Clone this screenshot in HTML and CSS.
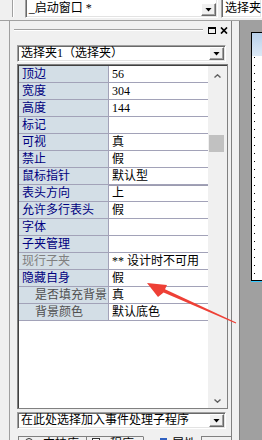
FILE: index.html
```html
<!DOCTYPE html>
<html lang="zh-CN">
<head>
    <meta charset="UTF-8">
    <title>属性</title>
    <link rel="stylesheet" href="styles.css">
</head>
<body>
    <div class="topbar">
        <div class="tb-grip"></div>
        <div class="combo win-combo">
            <span class="combo-text">_启动窗口 *</span>
            <span class="drop"></span>
        </div>
        <div class="combo unit-combo">
            <span class="combo-text">选择夹</span>
        </div>
    </div>
    <div class="main">
        <div class="panel">
            <div class="titlebar">
                <div class="grip-line"></div>
                <svg class="tb-btn max" width="8" height="7" viewBox="0 0 8 7">
                    <rect x="0.5" y="0.5" width="7" height="6" fill="none" stroke="#000"/>
                    <line x1="0" y1="1.5" x2="8" y2="1.5" stroke="#000"/>
                </svg>
                <svg class="tb-btn close" width="8" height="7" viewBox="0 0 8 7">
                    <path d="M1 0.5 L7 6.5 M7 0.5 L1 6.5" stroke="#000" stroke-width="1.7"/>
                </svg>
            </div>
            <div class="combo obj-combo">
                <span class="combo-text">选择夹1（选择夹）</span>
                <span class="drop"></span>
            </div>
            <div class="grid">
                <div class="rows">
                    <div class="row"><div class="k">顶边</div><div class="v">56</div></div>
                    <div class="row"><div class="k">宽度</div><div class="v">304</div></div>
                    <div class="row"><div class="k">高度</div><div class="v">144</div></div>
                    <div class="row"><div class="k">标记</div><div class="v"></div></div>
                    <div class="row"><div class="k">可视</div><div class="v">真</div></div>
                    <div class="row"><div class="k">禁止</div><div class="v">假</div></div>
                    <div class="row focus"><div class="k">鼠标指针</div><div class="v">默认型</div></div>
                    <div class="row"><div class="k">表头方向</div><div class="v">上</div></div>
                    <div class="row"><div class="k">允许多行表头</div><div class="v">假</div></div>
                    <div class="row"><div class="k">字体</div><div class="v"></div></div>
                    <div class="row"><div class="k">子夹管理</div><div class="v"></div></div>
                    <div class="row"><div class="k off">现行子夹</div><div class="v">** 设计时不可用</div></div>
                    <div class="row"><div class="k">隐藏自身</div><div class="v">假</div></div>
                    <div class="row"><div class="k sub">是否填充背景</div><div class="v">真</div></div>
                    <div class="row"><div class="k sub">背景颜色</div><div class="v">默认底色</div></div>
                </div>
                <div class="scrollbar">
                    <div class="sb-btn up">
                        <svg width="7" height="4" viewBox="0 0 7 4"><path d="M0.5 3.5 L3.5 0.8 L6.5 3.5" fill="none" stroke="#606060" stroke-width="1.4"/></svg>
                    </div>
                    <div class="sb-track"><div class="sb-thumb"></div></div>
                    <div class="sb-btn down">
                        <svg width="7" height="4" viewBox="0 0 7 4"><path d="M0.5 0.5 L3.5 3.2 L6.5 0.5" fill="none" stroke="#606060" stroke-width="1.4"/></svg>
                    </div>
                </div>
            </div>
            <div class="combo event-combo">
                <span class="combo-text">在此处选择加入事件处理子程序</span>
                <span class="drop"></span>
            </div>
            <div class="tabs">
                <div class="tab lib"><span class="tab-icon ring"></span><span class="tab-text">支持库</span></div>
                <div class="tab prog"><span class="tab-icon page"></span><span class="tab-text">程序</span></div>
                <div class="tab prop active"><span class="tab-icon tool"></span><span class="tab-text">属性</span></div>
                <div class="tab-rest"></div>
            </div>
        </div>
        <div class="splitter"></div>
        <div class="designer">
            <div class="form">
                <div class="form-cap"></div>
                <div class="form-client"></div>
            </div>
        </div>
    </div>
    <svg class="arrow" width="262" height="440" viewBox="0 0 262 440">
        <polygon points="147,283 167,285 165,289.2 236.2,322.5 235.8,323.5 163.6,292.4 158,297" fill="#ee4036"/>
    </svg>
</body>
</html>
```

FILE: styles.css
```css
* {
    box-sizing: border-box;
}
body {
    margin: 0;
    width: 262px;
    height: 440px;
    overflow: hidden;
    position: relative;
    background: #f0f0f0;
    font-family: "Liberation Serif", "Noto Sans CJK SC", serif;
    font-size: 12px;
    color: #000;
}

/* top toolbar */
.topbar {
    height: 21px;
    display: flex;
    align-items: flex-start;
    border-bottom: 1px solid #a0a0a0;
}
.tb-grip {
    width: 13px;
    height: 17px;
    border-right: 1px solid #a0a0a0;
    box-shadow: 1px 0 #fff;
}
.combo {
    display: flex;
    background: #fff;
    border: 1px solid;
    border-color: #a0a0a0 #fff #fff #a0a0a0;
    box-shadow: inset 1px 1px #696969, inset -1px -1px #e3e3e3;
}
.combo-text {
    flex: 1;
    padding-left: 3px;
    line-height: 15px;
    white-space: nowrap;
    overflow: hidden;
}
.drop {
    width: 15px;
    height: 13px;
    align-self: flex-end;
    margin: 0 1px 1px 0;
    background: #f0f0f0;
    border: 1px solid;
    border-color: #fff #696969 #696969 #fff;
    box-shadow: inset -1px -1px #a0a0a0;
    display: flex;
    align-items: center;
    justify-content: center;
}
.drop::after {
    content: "";
    width: 7px;
    height: 4px;
    background: #000;
    clip-path: polygon(0 0, 100% 0, 50% 100%);
}
.win-combo {
    margin: -3px 0 0 12px;
    width: 198px;
    height: 21px;
}
.win-combo .combo-text {
    padding-top: 3px;
    padding-left: 3px;
    line-height: 15px;
}
.unit-combo {
    margin: -3px 0 0 3px;
    flex: 1;
    height: 21px;
}
.unit-combo .combo-text {
    padding-top: 3px;
}

/* main area */
.main {
    display: flex;
    height: 419px;
}
.panel {
    margin-left: 9px;
    width: 223px;
    border-left: 1px solid #a0a0a0;
    border-right: 1px solid #808080;
    display: flex;
    flex-direction: column;
}
.panel > * {
    flex-shrink: 0;
}
.titlebar {
    height: 18px;
    display: flex;
    align-items: center;
    padding-left: 4px;
}
.grip-line {
    width: 189px;
    height: 2px;
    border-top: 1px solid #a0a0a0;
    border-bottom: 1px solid #fff;
}
.tb-btn.max {
    margin-left: 5px;
}
.tb-btn.close {
    margin-left: 4px;
}
.obj-combo {
    margin: 6px 0 0 7px;
    width: 209px;
    height: 17px;
}

/* property grid */
.grid {
    margin: 2px 0 0 7px;
    width: 211px;
    height: 345px;
    display: flex;
    padding: 1px 0 0 1px;
    border: 1px solid #808080;
    box-shadow: inset 1px 1px #404040;
    background: #fff;
}
.rows {
    width: 189px;
    background: #fff;
}
.row {
    display: flex;
    height: 17px;
    border-bottom: 1px solid #a2a2b8;
}
.row.focus {
    box-shadow: 0 1px #9c9cb0;
}
.k {
    width: 90px;
    padding-left: 3px;
    background: #d3dee6;
    border-right: 1px solid #a2a2b8;
    color: #000080;
    line-height: 16px;
    white-space: nowrap;
}
.k.off {
    color: #808080;
}
.k.sub {
    padding-left: 16px;
    color: #505050;
}
.v {
    flex: 1;
    padding-left: 3px;
    line-height: 16px;
    white-space: nowrap;
    overflow: hidden;
}
.scrollbar {
    flex: 1;
    display: flex;
    flex-direction: column;
    background: #f0f0f0;
}
.sb-btn {
    height: 17px;
    display: flex;
    align-items: center;
    justify-content: center;
}
.sb-btn.up {
    padding-top: 3px;
}
.sb-btn.down {
    padding-top: 2px;
}
.sb-track {
    flex: 1;
    padding-top: 52px;
}
.sb-thumb {
    margin-left: 1px;
    width: 15px;
    height: 17px;
    background: #c1c1c1;
}

.event-combo {
    margin: 3px 0 0 7px;
    width: 209px;
    height: 17px;
}

/* bottom tabs */
.tabs {
    display: flex;
    margin: 7px 0 0 8px;
    height: 12px;
    overflow: hidden;
}
.tab {
    display: flex;
    align-items: flex-start;
    border-top: 1px solid #808080;
    border-left: 1px solid #808080;
    line-height: 14px;
}
.tab.lib {
    width: 68px;
}
.tab.prog {
    width: 57px;
}
.tab.prop {
    width: 58px;
    border-top-color: transparent;
}
.tab-rest {
    flex: 1;
    border-top: 1px solid #808080;
    border-left: 1px solid #808080;
}
.tab-text {
    white-space: nowrap;
}
.tab-icon {
    display: block;
    margin-top: 1px;
}
.ring {
    margin-left: 6px;
    margin-right: 10px;
    width: 8px;
    height: 8px;
    border: 1px solid #303030;
    border-radius: 50%;
}
.page {
    margin-left: 5px;
    margin-right: 10px;
    width: 8px;
    height: 9px;
    border: 1px solid #303030;
    background: #fff;
}
.tool {
    margin-left: 16px;
    margin-right: 5px;
    width: 7px;
    height: 6px;
    background: #3060c0;
}

/* form designer */
.splitter {
    width: 7px;
}
.designer {
    flex: 1;
    background: #a0a0a0;
    border-left: 1px solid #808080;
    padding: 11px 0 0 11px;
}
.form {
    height: 249px;
    display: flex;
    flex-direction: column;
    border: 1px solid #000;
    border-right: none;
    box-shadow: 0 1px #33c8ff;
}
.form-cap {
    height: 23px;
    background: linear-gradient(#b8d0ea, #dce9f6);
}
.form-client {
    flex: 1;
    background-color: #fff;
    background-image: conic-gradient(at 1px 1px, transparent 75%, #000 0);
    background-size: 8px 8px;
    background-position: 2px 1px;
}

.arrow {
    position: absolute;
    left: 0;
    top: 0;
    pointer-events: none;
}
```
